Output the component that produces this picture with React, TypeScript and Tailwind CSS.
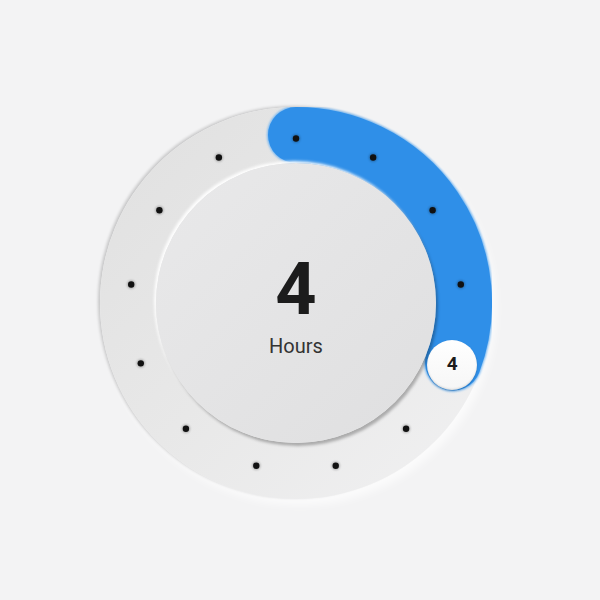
const STEPS = 13;
const VALUE = 4;
const R = 168;
const C = 196;

function pointAt(i: number, r = R, cy = C) {
  const a = (i * 2 * Math.PI) / STEPS;
  return { x: C + r * Math.sin(a), y: cy - r * Math.cos(a) };
}

function Ring() {
  const end = pointAt(VALUE);
  const large = VALUE / STEPS > 0.5 ? 1 : 0;
  const d = `M ${C} ${C - R} A ${R} ${R} 0 ${large} 1 ${end.x} ${end.y}`;
  return (
    <svg viewBox="0 0 392 392" className="absolute inset-0 h-full w-full">
      <defs>
        <filter id="glow" x="-20%" y="-20%" width="140%" height="140%">
          <feGaussianBlur stdDeviation="1.2" />
        </filter>
      </defs>
      <path d={d} fill="none" stroke="#6fb4f2" strokeWidth={58} strokeLinecap="round" filter="url(#glow)" />
      <path d={d} fill="none" stroke="#2f8fe8" strokeWidth={56} strokeLinecap="round" />
      {Array.from({ length: STEPS }, (_, i) => i)
        .filter((i) => i !== VALUE)
        .map((i) => {
          const p = pointAt(i, 166, C + 1.5);
          return (
            <g key={i}>
              <circle cx={p.x} cy={p.y} r={4.2} fill="#000" opacity={0.25} filter="url(#glow)" />
              <circle cx={p.x} cy={p.y} r={3.2} fill="#111" />
            </g>
          );
        })}
    </svg>
  );
}

export default function App() {
  const knob = pointAt(VALUE);
  return (
    <div
      className="flex h-[600px] w-[600px] items-center justify-center bg-[#f3f3f4] pr-2 pt-[6px]"
      style={{ fontFamily: "Roboto, 'Liberation Sans', sans-serif" }}
    >
      <div className="relative h-[392px] w-[392px] rounded-full bg-gradient-to-br from-[#e0e0e0] via-[#e8e8e8] to-[#f1f1f2] shadow-[-2px_-1px_3px_rgba(0,0,0,0.18),4px_6px_10px_rgba(255,255,255,0.7)]">
        <Ring />
        <div className="absolute left-[56px] top-[56px] flex h-[280px] w-[280px] flex-col items-center justify-center rounded-full bg-gradient-to-br from-[#e9e9ea] to-[#dfdfe0] shadow-[2px_3px_3px_rgba(0,0,0,0.28),-2px_-2px_3px_rgba(255,255,255,0.95)]">
          <div className="mt-[4px] text-[72px] font-bold leading-none text-[#1c1c1c]">{VALUE}</div>
          <div className="mt-[10px] text-[20px] leading-none text-[#333]">Hours</div>
        </div>
        <div
          className="absolute flex h-[50px] w-[50px] -translate-x-1/2 -translate-y-1/2 items-center justify-center rounded-full bg-gradient-to-b from-white to-[#f6f6f6] text-[19px] font-bold text-[#1c1c1c] shadow-[inset_0_-1px_2px_rgba(0,0,0,0.12),0_1px_2px_rgba(0,0,0,0.2)]"
          style={{ left: knob.x - 1, top: knob.y + 2 }}
        >
          {VALUE}
        </div>
      </div>
    </div>
  );
}
